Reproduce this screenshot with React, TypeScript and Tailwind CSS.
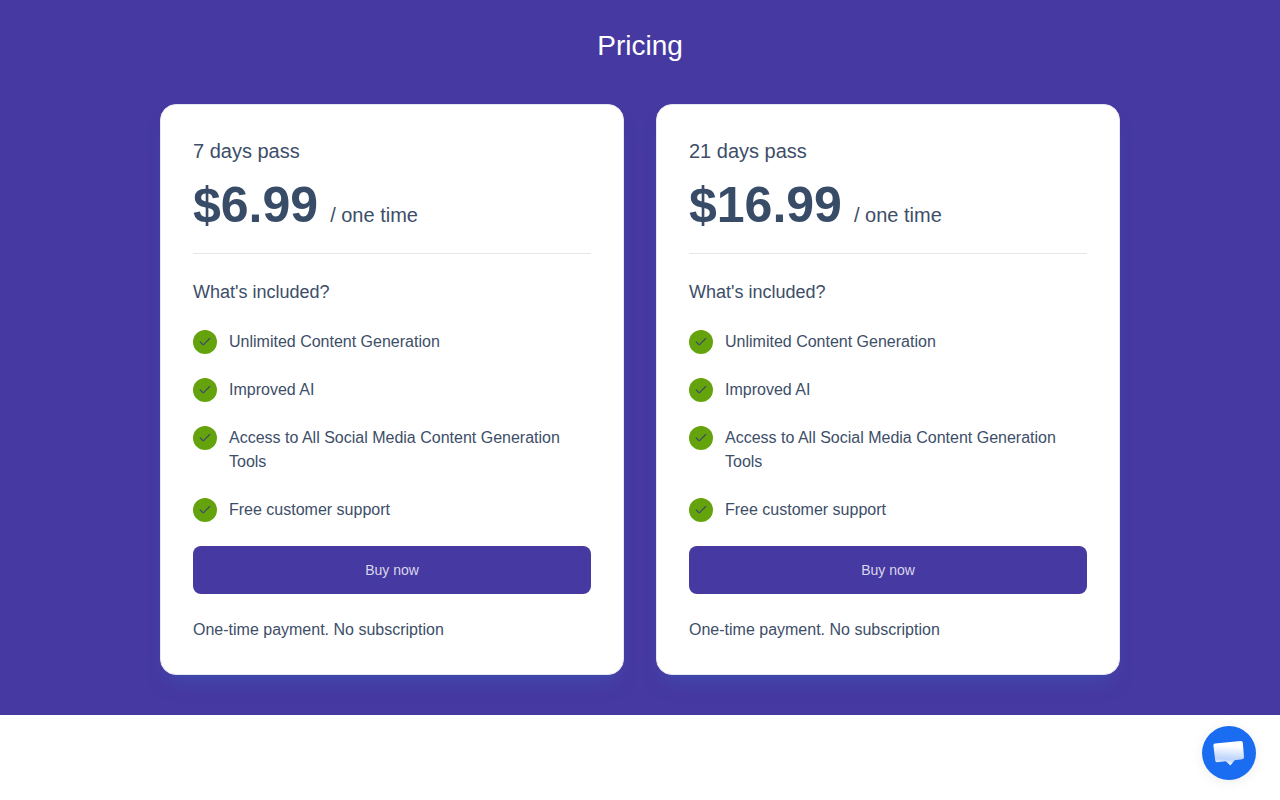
import { Check } from "lucide-react";

interface Plan {
  name: string;
  price: string;
}

const plans: Plan[] = [
  { name: "7 days pass", price: "$6.99" },
  { name: "21 days pass", price: "$16.99" },
];

const features = [
  "Unlimited Content Generation",
  "Improved AI",
  "Access to All Social Media Content Generation Tools",
  "Free customer support",
];

const PlanCard = ({ name, price }: Plan) => {
  return (
    <article className="flex flex-col rounded-2xl border border-slate-200 bg-white p-8 text-[#3d4e68] shadow-[0_14px_20px_-10px_rgba(56,100,190,0.5)]">
      <h2 className="text-xl leading-7">{name}</h2>
      <p className="mt-2 flex items-baseline gap-3 leading-[64px]">
        <span className="text-[50px] font-bold text-[#384c68]">{price}</span>
        <span className="text-xl">/ one time</span>
      </p>
      <hr className="mt-4 border-gray-200" />

      <h3 className="mt-6 text-lg leading-7">What's included?</h3>
      <ul className="mt-6 flex flex-col gap-6">
        {features.map((feature) => (
          <li key={feature} className="flex items-start gap-3">
            <span className="flex h-6 w-6 shrink-0 items-center justify-center rounded-full bg-[#65a30d]">
              <Check className="h-3.5 w-3.5 text-[#384c68]" strokeWidth={2} />
            </span>
            <span className="text-base">{feature}</span>
          </li>
        ))}
      </ul>

      <button type="button" className="mt-6 h-12 rounded-lg bg-[#4639a1] text-sm text-[#d9d7ec]">
        Buy now
      </button>
      <p className="mt-6 text-base">One-time payment. No subscription</p>
    </article>
  );
};

const ChatButton = () => {
  return (
    <button
      type="button"
      aria-label="Open chat"
      className="fixed right-6 bottom-5 h-[54px] w-[54px] rounded-full bg-[#1a6df0] shadow-[0_2px_12px_rgba(0,0,0,0.08)]"
    >
      <svg viewBox="0 0 54 54" className="h-full w-full" aria-hidden="true">
        <defs>
          <linearGradient id="bubble" x1="0.45" y1="1" x2="0.55" y2="0">
            <stop offset="0" stopColor="#f5f9ff" />
            <stop offset="0.25" stopColor="#bcd3fb" />
            <stop offset="0.8" stopColor="#fff" />
          </linearGradient>
        </defs>
        <path
          d="M13 17.6 L38.8 15 Q40.6 14.9 40.8 16.6 L42 31 Q42.1 32.9 40.2 33.2 L32.6 34.2 L28.4 39.4 L23.8 35.2 L15.2 36.2 Q13.4 36.3 13.2 34.6 L11.4 19.6 Q11.3 17.8 13 17.6 Z"
          fill="url(#bubble)"
        />
      </svg>
    </button>
  );
};

export default function App() {
  return (
    <main className="min-h-screen bg-white font-['Liberation_Sans',Arial,sans-serif]">
      <section className="bg-[#4639a1] px-4 pt-7 pb-10">
        <h1 className="text-center text-[28px] leading-9 text-white">Pricing</h1>
        <div className="mx-auto mt-10 grid max-w-[960px] gap-8 md:grid-cols-2">
          {plans.map((plan) => (
            <PlanCard key={plan.name} name={plan.name} price={plan.price} />
          ))}
        </div>
      </section>
      <ChatButton />
    </main>
  );
}
